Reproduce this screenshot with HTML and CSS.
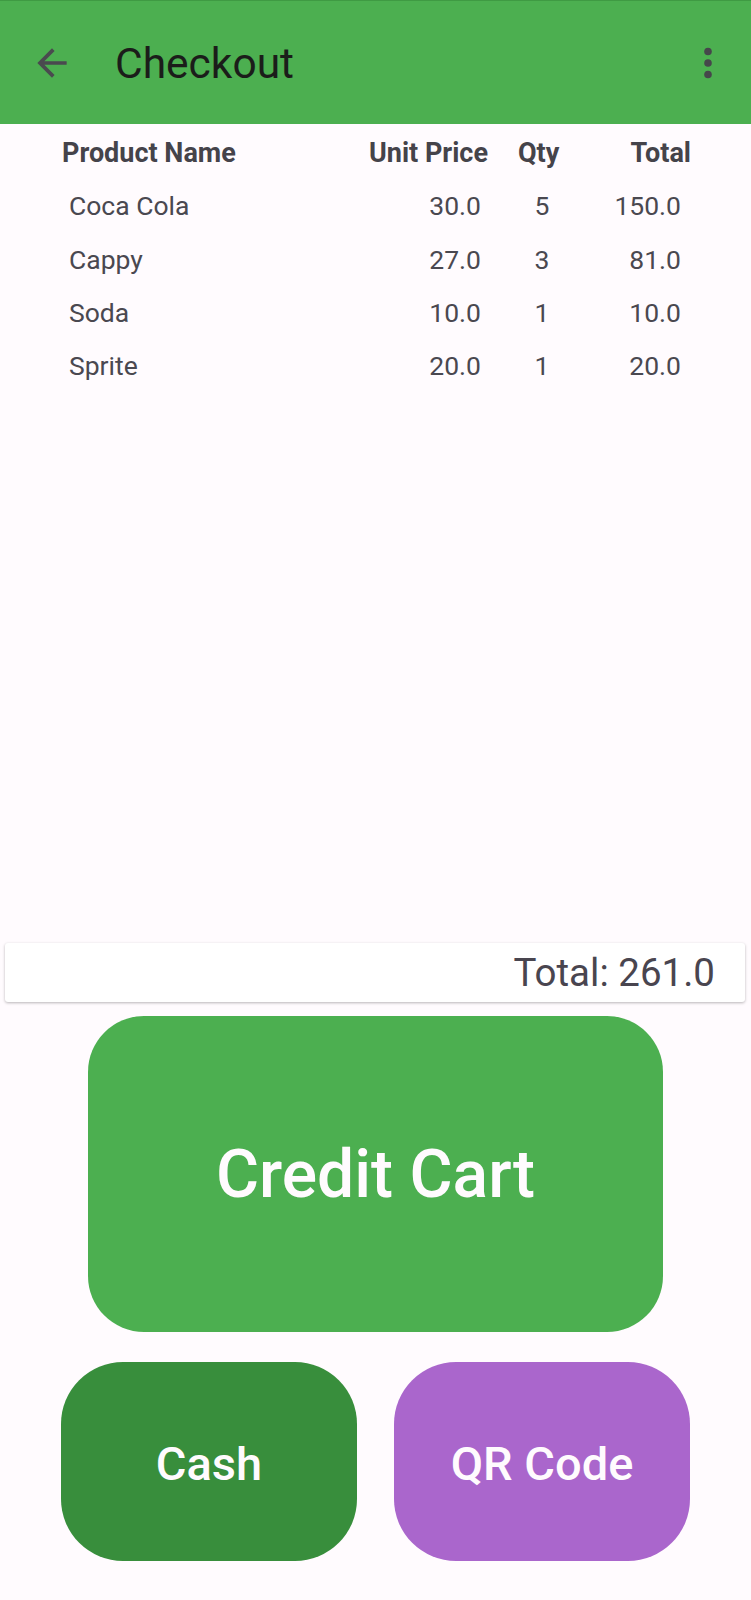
FILE: index.html
```html
<!DOCTYPE html>
<html lang="en">
<head>
<meta charset="utf-8">
<title>Checkout</title>
<link rel="stylesheet" href="styles.css">
</head>
<body>
<header class="appbar">
  <svg class="back" viewBox="0 0 24 24" width="44" height="44" aria-hidden="true">
    <path d="M20 11H7.83l5.59-5.59L12 4l-8 8 8 8 1.41-1.41L7.83 13H20v-2z" fill="#4a4a4f"/>
  </svg>
  <h1 class="title">Checkout</h1>
  <svg class="more" viewBox="0 0 12 36" width="12" height="36" aria-hidden="true">
    <circle cx="6" cy="6.5" r="3.8" fill="#46464b"/>
    <circle cx="6" cy="18" r="3.8" fill="#46464b"/>
    <circle cx="6" cy="29.5" r="3.8" fill="#46464b"/>
  </svg>
</header>

<main class="table">
  <div class="row head">
    <div class="c-name">Product Name</div>
    <div class="c-price">Unit Price</div>
    <div class="c-qty">Qty</div>
    <div class="c-total">Total</div>
  </div>
  <div class="row data">
    <div class="c-name">Coca Cola</div>
    <div class="c-price">30.0</div>
    <div class="c-qty">5</div>
    <div class="c-total">150.0</div>
  </div>
  <div class="row data">
    <div class="c-name">Cappy</div>
    <div class="c-price">27.0</div>
    <div class="c-qty">3</div>
    <div class="c-total">81.0</div>
  </div>
  <div class="row data">
    <div class="c-name">Soda</div>
    <div class="c-price">10.0</div>
    <div class="c-qty">1</div>
    <div class="c-total">10.0</div>
  </div>
  <div class="row data">
    <div class="c-name">Sprite</div>
    <div class="c-price">20.0</div>
    <div class="c-qty">1</div>
    <div class="c-total">20.0</div>
  </div>
</main>

<div class="total-bar">Total: 261.0</div>

<button class="btn btn-credit">Credit Cart</button>
<div class="btn-row">
  <button class="btn btn-cash">Cash</button>
  <button class="btn btn-qr">QR Code</button>
</div>
</body>
</html>
```

FILE: styles.css
```css
* { box-sizing: border-box; }

html, body {
  margin: 0;
  padding: 0;
}

body {
  width: 751px;
  height: 1600px;
  overflow: hidden;
  display: flex;
  flex-direction: column;
  background: #fffbfe;
  font-family: Roboto, "Noto Sans", "Liberation Sans", sans-serif;
  color: #49454f;
}

.appbar {
  height: 124px;
  flex: none;
  display: flex;
  align-items: center;
  background: #4caf50;
  border-top: 1px solid #3f9a43;
}

.back {
  margin-left: 30px;
  flex: none;
}

.title {
  margin: 2px 0 0 41px;
  font-size: 42.5px;
  font-weight: 400;
  color: #1b1d1a;
  flex: 1;
}

.more {
  margin-right: 37px;
  flex: none;
}

.table {
  flex: 1;
  padding-top: 2px;
}

.row {
  display: grid;
  grid-template-columns: 305px 140px 70px 114px;
  margin-left: 62px;
  height: 53.3px;
  align-items: center;
  font-size: 26.5px;
}

.head {
  font-weight: 700;
  font-size: 27px;
  color: #45434a;
}

.data {
  color: #4a4850;
}

.c-price, .c-total { text-align: right; }

.head .c-price { padding-right: 19px; }
.head .c-qty { padding-left: 11px; }

.data .c-name { padding-left: 7px; }
.data .c-price { padding-right: 26px; }
.data .c-qty { text-align: center; }
.data .c-total { padding-right: 10px; }

.total-bar {
  flex: none;
  height: 59px;
  margin: 0 6px 0 5px;
  background: #ffffff;
  border-radius: 3px;
  box-shadow: 0 1px 3px rgba(0, 0, 0, 0.28);
  display: flex;
  align-items: center;
  justify-content: flex-end;
  padding-right: 30px;
  font-size: 38.5px;
  color: #49454f;
}

.btn {
  border: none;
  padding: 0;
  margin: 0;
  font-family: Roboto, "Noto Sans", "Liberation Sans", sans-serif;
  font-weight: 500;
  color: #fffbfe;
  cursor: pointer;
}

.btn-credit {
  flex: none;
  align-self: center;
  margin-top: 14px;
  width: 575px;
  height: 316px;
  border-radius: 56px;
  background: #4caf50;
  font-size: 66px;
}

.btn-row {
  flex: none;
  display: flex;
  justify-content: center;
  gap: 37px;
  margin-top: 30px;
  margin-bottom: 39px;
}

.btn-cash, .btn-qr {
  width: 296px;
  height: 199px;
  border-radius: 62px;
  font-size: 47px;
  padding-top: 4px;
}

.btn-cash { background: #388e3c; }
.btn-qr { background: #aa66cc; }
```
